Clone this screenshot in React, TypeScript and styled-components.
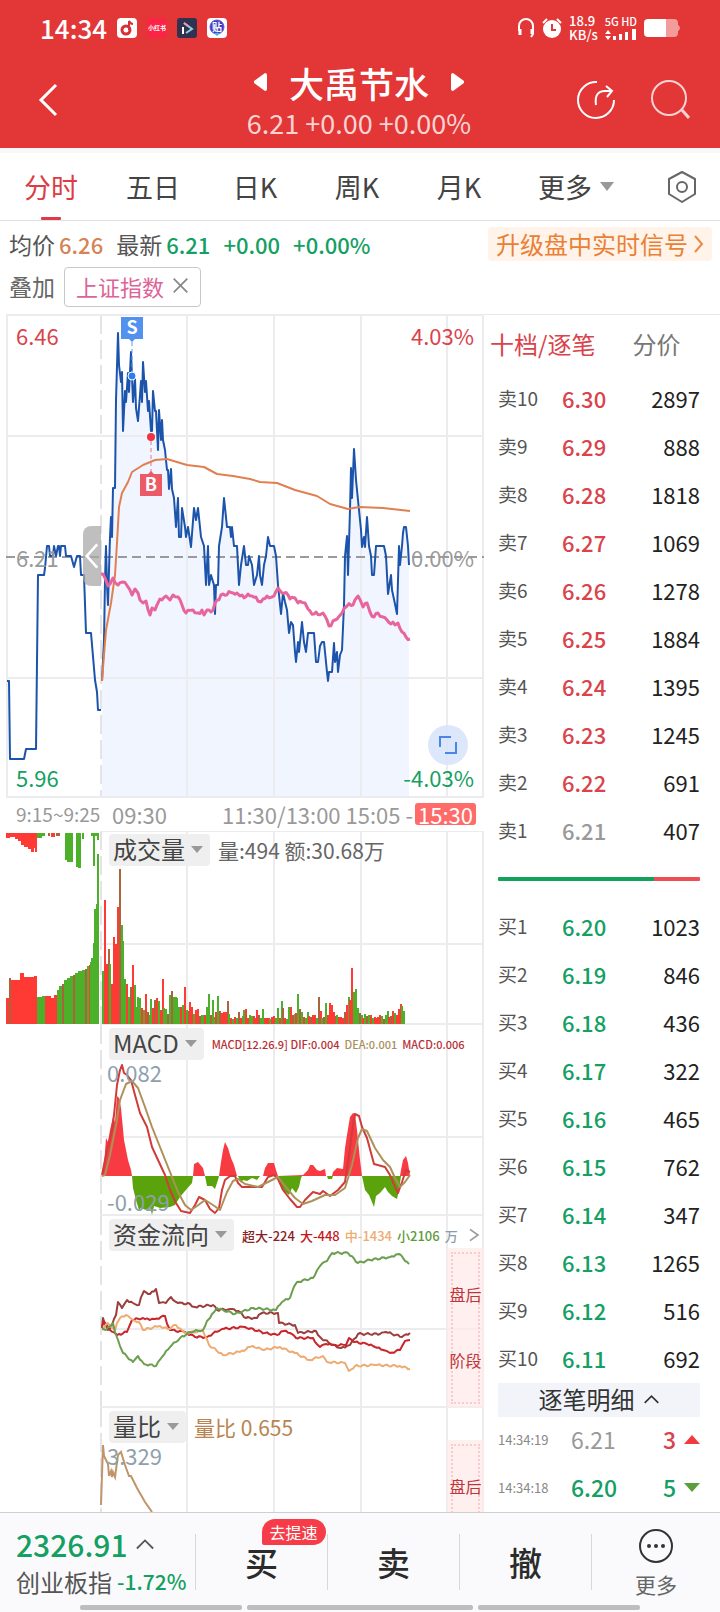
import React from 'react'
import styled, { createGlobalStyle } from 'styled-components'

const RED = '#d9434b'
const GREEN = '#14a062'
const GRID = '#ececee'

const GlobalStyle = createGlobalStyle`
  * {
    box-sizing: border-box;
  }

  body {
    margin: 0;
    background: #fff;
    color: #333;
    font-family: "Noto Sans CJK SC", "Noto Sans", sans-serif;
    font-size: 22px;
    line-height: 1;
  }

  button {
    padding: 0;
    border: none;
    background: none;
    color: inherit;
    font: inherit;
  }

  a {
    color: inherit;
    text-decoration: none;
  }

  svg {
    display: block;
    flex-shrink: 0;
  }
`

type Point = [number, number]

const toPoints = (text: string): Point[] =>
  text.trim().split(/\s+/).map(pair => pair.split(',').map(Number) as Point)

// puts small steps between the samples so that a line looks like tick data
const ragged = (text: string, amount: number) => {
  const points = toPoints(text)
  const out: Point[] = []
  points.forEach(([x, y], i) => {
    out.push([x, y])
    const next = points[i + 1]
    if (!next) {
      return
    }
    const steps = Math.floor((next[0] - x) / 2)
    for (let s = 1; s < steps; s++) {
      const px = x + s * 2
      const py = y + ((next[1] - y) * s) / steps
      out.push([px, py + Math.sin(px * 2.3) * amount])
    }
  })
  return out.map(p => p.join(',')).join(' ')
}

const AUCTION = `7,681 9,681 10,759 24,759 26,749 36,749 38,575 44,575 45,568 47,546 49,546 50,556 53,556 54,546 56,556
  58,546 59,546 60,556 61,546 65,546 66,556 71,556 74,567 77,556 80,556 81,575 84,575 86,633 91,633 95,680 97,692 98,710 101,710`

const PRICE = `102,681 104,640 105,580 106,546 107,585 108,605 109,570 110,537 111,517 112,537 113,488 115,488 116,400
  118,333 119,365 121,382 122,372 123,431 125,391 126,402 128,373 129,392 131,352 133,402 135,378 136,408 138,421 140,395
  141,381 142,402 143,362 145,392 146,381 148,411 149,401 151,431 152,431 153,391 155,411 156,411 158,450 159,410 161,440
  162,420 163,440 165,450 167,470 168,470 169,489 171,469 172,489 174,498 176,527 178,498 179,537 181,537 182,508 185,527
  186,537 188,527 191,547 194,508 196,520 198,508 201,537 204,546 206,585 208,546 209,585 211,575 214,585 215,614 216,585
  218,585 219,546 222,527 224,498 227,527 230,527 231,537 232,527 234,546 237,546 239,585 241,565 244,546 246,565 248,565
  249,556 252,565 254,585 257,575 259,556 260,575 262,585 264,565 266,556 268,537 270,546 274,546 276,556 278,585 281,614
  283,593 285,602 287,610 289,633 291,622 293,625 295,652 296,662 298,642 299,652 302,622 304,642 306,652 308,633 314,633
  316,662 318,662 320,646 322,642 324,642 326,662 327,672 328,681 329,672 332,672 334,643 335,662 337,652 338,672 340,655
  342,650 344,605 345,556 347,536 348,575 350,510 351,468 352,498 354,449 356,480 359,510 361,530 362,547 364,537 365,547
  367,517 369,546 371,556 372,575 374,575 376,546 378,546 384,546 386,556 388,594 391,575 392,590 395,604 397,614 399,546
  400,565 402,546 403,533 404,527 406,527 408,546 409,565`

const AVERAGE = `102,681 104,655 106,630 111,603 115,575 117,543 119,507 122,493 128,482 132,472 143,465 155,460 167,459
  187,465 204,467 217,474 233,476 250,479 260,482 277,483 295,490 317,496 330,504 348,509 359,507 383,508 410,511`

const INDEX = `101,574 105,578 108,586 113,578 118,585 123,582 128,587 132,595 135,589 138,593 143,603 146,601 150,615
  152,608 155,610 160,599 166,596 170,600 173,595 178,597 182,605 186,613 193,610 198,613 202,610 204,615 207,610 213,610
  217,600 223,594 233,593 240,596 252,596 261,602 263,599 272,597 278,588 282,593 288,595 290,599 295,598 298,603 305,603
  308,609 314,614 323,613 327,620 329,626 335,620 342,613 347,606 353,605 358,596 363,607 367,603 370,612 374,617 378,613
  383,617 387,620 395,625 398,623 402,632 406,637 410,639`

const DIF = `102,1175 107,1150 112,1130 114,1115 117,1085 120,1070 122,1065 124,1073 127,1075 131,1080 135,1095 140,1113
  147,1127 152,1147 158,1160 165,1175 170,1190 176,1203 181,1211 190,1213 195,1205 199,1197 205,1200 210,1209 215,1213
  219,1208 222,1190 225,1180 230,1176 235,1176 238,1183 242,1187 262,1187 268,1177 274,1175 278,1179 283,1190 290,1199
  297,1207 300,1207 305,1200 313,1192 320,1194 323,1191 330,1196 338,1190 345,1182 349,1155 353,1125 355,1114 359,1116
  362,1127 367,1138 374,1164 385,1167 390,1175 395,1187 398,1193 402,1182 406,1170 410,1172`

const DEA = `102,1176 105,1175 110,1155 117,1120 120,1100 126,1084 132,1081 138,1088 145,1107 152,1127 160,1147 170,1172
  178,1192 185,1205 191,1210 197,1206 205,1200 213,1205 220,1210 227,1192 233,1181 238,1179 245,1184 258,1187 268,1182
  278,1177 285,1186 295,1198 303,1204 312,1201 325,1195 335,1195 345,1188 352,1165 358,1138 362,1129 367,1131 375,1148
  383,1160 390,1167 395,1178 400,1187 405,1182 410,1175`

const MACD_UP = `102,1176 104,1165 106,1138 108,1142 110,1130 113,1117 115,1122 117,1096 119,1098 121,1108 124,1140
  126,1150 128,1160 131,1170 132,1176 193,1176 194,1164 198,1162 203,1168 205,1176 219,1176 221,1162 223,1150 225,1142
  228,1148 231,1158 234,1165 237,1176 263,1176 265,1168 268,1163 274,1163 276,1170 278,1176 303,1175 308,1170 310,1165
  313,1165 317,1170 320,1171 325,1169 326,1176 332,1176 333,1172 337,1168 343,1169 345,1148 347,1135 350,1117 353,1113
  355,1114 357,1130 360,1160 362,1176 400,1176 401,1170 403,1160 406,1156 408,1163 410,1176`

const MACD_DOWN = `132,1176 133,1188 136,1200 139,1210 141,1208 146,1210 150,1207 152,1215 154,1206 160,1208 170,1207
  175,1205 180,1197 185,1191 192,1183 193,1176 205,1176 207,1186 212,1186 215,1189 218,1180 219,1176 238,1176 241,1183
  243,1180 247,1181 252,1178 257,1180 260,1176 278,1176 281,1185 284,1191 289,1195 292,1188 296,1193 299,1187 301,1178
  302,1176 327,1176 328,1179 332,1179 333,1176 362,1176 365,1190 369,1195 374,1207 376,1196 380,1193 385,1187 388,1192
  392,1196 397,1199 399,1190 401,1176`

const FLOWS = [
  {
    color: '#9c3f3c',
    points: `102,1328 103,1318 108,1330 112,1325 116,1315 118,1302 122,1308 127,1300 133,1303 139,1305 144,1291 150,1294
      156,1289 159,1303 166,1303 171,1297 178,1303 190,1304 195,1307 213,1305 217,1310 230,1309 238,1311 246,1318 257,1318
      262,1313 278,1313 279,1323 295,1325 298,1333 316,1331 321,1338 333,1345 341,1348 350,1345 358,1334 380,1334 386,1332
      402,1337 410,1333`
  },
  {
    color: '#c9262b',
    points: `102,1326 104,1322 110,1330 117,1335 127,1332 132,1320 143,1318 150,1320 155,1319 165,1316 170,1330 185,1332
      195,1337 207,1337 222,1329 245,1327 265,1333 277,1335 284,1331 290,1333 296,1338 313,1338 320,1347 326,1344 335,1345
      346,1345 349,1338 355,1342 367,1344 375,1347 383,1350 390,1353 400,1350 405,1341 410,1340`
  },
  {
    color: '#ecac72',
    points: `102,1330 108,1323 115,1330 120,1318 126,1315 133,1320 139,1322 143,1330 160,1326 168,1329 176,1325 185,1333
      203,1331 209,1345 223,1355 240,1352 253,1346 263,1350 280,1347 295,1353 310,1360 323,1356 327,1362 345,1363 349,1371
      355,1366 375,1365 400,1366 410,1369`
  },
  {
    color: '#6b9e4e',
    points: `102,1328 106,1330 113,1323 118,1340 123,1353 133,1362 138,1356 144,1364 156,1366 162,1357 170,1347 180,1338
      190,1332 203,1330 210,1318 217,1308 223,1310 235,1314 253,1308 276,1310 282,1302 290,1298 297,1282 313,1278 320,1266
      327,1261 332,1253 348,1253 358,1263 370,1260 390,1257 399,1254 409,1264`
  }
]

const RATIO = `101,1505 103,1445 104,1456 106,1460 108,1464 109,1476 111,1471 112,1477 113,1472 115,1477 118,1455 121,1452
  125,1465 129,1476 131,1476 137,1488 145,1502 152,1512`

// height and colour of each bar (r up, g down, m mixed)
const VOLUME = `53g 124r 60r 75m 60g 40r 87r 80r 117r 155m 99g 83g 45g 40r 27g 37m 59r 39g 17g 27g 26g 16r 14g 30r 12m 9g 25g
  16r 24m 26r 23g 14r 45r 16g 15g 10m 29g 33m 27g 27g 26g 17g 17r 19g 37r 14g 13m 22r 17r 10g 14r 15r 8m 9g 9g 9r 17g 30g 9m 24g
  7g 12r 28g 13m 11r 12r 12r 23m 10g 6r 5g 7r 6g 12m 6r 8g 14g 15r 6r 9g 8g 8r 6r 14r 9m 6g 15g 6r 6r 6r 5g 7r 8r 6g 16g 6r 23g
  16m 6r 5g 17g 17r 9m 10g 11r 30g 15m 12g 7r 6g 12g 8r 7m 9r 9r 6g 27m 13r 6g 7m 21g 9r 21r 19r 12r 8m 9g 7r 7r 6r 12m 19r 27g
  24r 56r 32g 35g 16g 11m 9g 6r 10g 8m 9g 9r 6g 7r 6r 7r 9r 8g 5m 9g 13g 7r 8m 13r 11g 9r 15r 20r 18g 13g`
  .trim().split(/\s+/)
  .map((item, i) => ({ x: Math.round(102 + i * 1.86), height: parseInt(item, 10), tone: item.slice(-1) }))
  .filter(bar => bar.x < 409)

const BAR_COLORS: Record<string, string> = { r: '#ff3a35', g: '#4db02b', m: '#a9643c' }

// x, width, top, bottom, tone
const AUCTION_BARS: [number, number, number, number, string][] = [
  [6, 3, 998, 1024, 'r'], [9, 2, 978, 1024, 'm'], [11, 9, 980, 1024, 'r'], [20, 4, 973, 1024, 'r'], [24, 10, 977, 1024, 'r'],
  [34, 3, 976, 1024, 'r'], [37, 5, 997, 1024, 'g'], [42, 3, 996, 1024, 'g'], [45, 6, 996, 1024, 'r'], [51, 3, 998, 1024, 'r'],
  [54, 3, 995, 1024, 'r'], [57, 2, 990, 1024, 'g'], [59, 3, 986, 1024, 'g'], [62, 2, 984, 1024, 'm'], [64, 3, 980, 1024, 'g'],
  [67, 3, 978, 1024, 'g'], [70, 3, 976, 1024, 'g'], [73, 2, 975, 1024, 'm'], [75, 3, 973, 1024, 'g'], [78, 4, 971, 1024, 'g'],
  [82, 3, 970, 1024, 'g'], [85, 2, 969, 1024, 'm'], [87, 2, 966, 1024, 'g'], [89, 1, 965, 1024, 'r'], [90, 1, 962, 1024, 'g'],
  [91, 2, 958, 1024, 'g'], [93, 1, 943, 1024, 'g'], [94, 2, 909, 1024, 'g'], [96, 1, 904, 1024, 'g'], [97, 2, 854, 1024, 'g'],
  [6, 4, 833, 838, 'r'], [10, 5, 833, 837, 'r'], [15, 3, 833, 839, 'r'], [18, 3, 833, 841, 'r'], [21, 3, 833, 845, 'r'],
  [24, 4, 833, 847, 'r'], [28, 3, 833, 849, 'r'], [31, 3, 833, 852, 'r'], [34, 1, 833, 848, 'r'], [35, 2, 833, 852, 'r'],
  [37, 5, 833, 838, 'g'], [42, 3, 833, 836, 'g'], [48, 2, 833, 836, 'm'], [51, 4, 833, 837, 'r'], [56, 4, 833, 836, 'm'],
  [65, 2, 833, 860, 'g'], [67, 6, 833, 862, 'g'], [76, 2, 833, 867, 'g'], [78, 3, 833, 868, 'g'], [82, 2, 833, 839, 'g'],
  [91, 7, 833, 836, 'g'], [93, 2, 833, 866, 'g'], [97, 2, 833, 840, 'g']
]

const SELLS: [string, string, number][] = [
  ['卖10', '6.30', 2897], ['卖9', '6.29', 888], ['卖8', '6.28', 1818], ['卖7', '6.27', 1069], ['卖6', '6.26', 1278],
  ['卖5', '6.25', 1884], ['卖4', '6.24', 1395], ['卖3', '6.23', 1245], ['卖2', '6.22', 691], ['卖1', '6.21', 407]
]

const BUYS: [string, string, number][] = [
  ['买1', '6.20', 1023], ['买2', '6.19', 846], ['买3', '6.18', 436], ['买4', '6.17', 322], ['买5', '6.16', 465],
  ['买6', '6.15', 762], ['买7', '6.14', 347], ['买8', '6.13', 1265], ['买9', '6.12', 516], ['买10', '6.11', 692]
]

const Grid = ({ top, bottom, lines, from = 101 }: { top: number, bottom: number, lines: number[], from?: number }) => (
  <g stroke={GRID} strokeWidth="2">
    {[187, 274, 361, 447].map(x => <line key={x} x1={x} x2={x} y1={top} y2={bottom} />)}
    <line x1="483" x2="483" y1={top} y2={bottom} />
    <line x1="101" x2="101" y1={top} y2={bottom} strokeDasharray="19 6" stroke="#e4e4e6" />
    {lines.map(y => <line key={y} x1={from} x2="484" y1={y} y2={y} />)}
  </g>
)

const PriceChart = () => (
  <ChartSvg viewBox="6 314 478 484" role="img" aria-label="分时走势">
    <polygon points={`102,797 ${PRICE} 409,797`} fill="#f0f5ff" />
    <Grid top={315} bottom={798} lines={[315, 436, 678, 797]} from={6} />
    <line x1="7" x2="7" y1="315" y2="798" stroke={GRID} strokeWidth="2" />
    <line x1="6" x2="484" y1="557" y2="557" stroke="#9a9a9a" strokeWidth="2" strokeDasharray="9 5" />
    <g fill="none" strokeLinejoin="round">
      <polyline points={AUCTION} stroke="#1c54ab" strokeWidth="2" />
      <polyline points={PRICE} stroke="#1c54ab" strokeWidth="2" />
      <polyline points={AVERAGE} stroke="#e08050" strokeWidth="2" />
      <polyline points={ragged(INDEX, 2)} stroke="#e8659b" strokeWidth="3" />
    </g>
    <line x1="132" x2="132" y1="342" y2="372" stroke="#5f97ee" strokeWidth="1" strokeDasharray="4 3" />
    <circle cx="132" cy="376" r="4" fill="#2c7df5" stroke="#fff" />
    <path d="M121 317h22v22h-8l-3 3-3-3h-8z" fill="#5291ee" />
    <line x1="151" x2="151" y1="441" y2="472" stroke="#ea7385" strokeWidth="1" strokeDasharray="4 3" />
    <circle cx="151" cy="437" r="4" fill="#ee3642" />
    <path d="M140 474h8l3-3 3 3h8v22h-22z" fill="#ec5a68" />
    <g fill="#fff" fontSize="18" fontWeight="700" textAnchor="middle">
      <text x="132" y="334">S</text>
      <text x="151" y="491">B</text>
    </g>
  </ChartSvg>
)

const VolumeChart = () => (
  <ChartSvg viewBox="6 831 478 194" role="img" aria-label="成交量">
    <Grid top={831} bottom={1025} lines={[831, 944, 1024]} />
    {AUCTION_BARS.map(([x, width, top, bottom, tone], i) => (
      <rect key={i} x={x} y={top} width={width} height={bottom - top} fill={BAR_COLORS[tone]} />
    ))}
    {VOLUME.map(bar => (
      <rect key={bar.x} x={bar.x} y={1024 - bar.height} width="2" height={bar.height} fill={BAR_COLORS[bar.tone]} />
    ))}
  </ChartSvg>
)

const MacdChart = () => (
  <ChartSvg viewBox="6 1025 478 191" role="img" aria-label="MACD">
    <Grid top={1025} bottom={1216} lines={[1137, 1215]} />
    <polygon points={MACD_UP} fill="#f83a42" />
    <polygon points={MACD_DOWN} fill="#5ba30c" />
    <g fill="none" strokeWidth="2" strokeLinejoin="round">
      <polyline points={DIF} stroke="#d23b3b" />
      <polyline points={DEA} stroke="#ad9159" />
    </g>
  </ChartSvg>
)

const FlowChart = () => (
  <ChartSvg viewBox="6 1216 478 192" role="img" aria-label="资金流向">
    <Grid top={1216} bottom={1408} lines={[1329, 1407]} />
    <g fill="none" strokeWidth="2" strokeLinejoin="round">
      {FLOWS.map(flow => <polyline key={flow.color} points={ragged(flow.points, 1)} stroke={flow.color} />)}
    </g>
  </ChartSvg>
)

const RatioChart = () => (
  <ChartSvg viewBox="6 1408 478 192" role="img" aria-label="量比">
    <Grid top={1408} bottom={1600} lines={[1520]} />
    <polyline points={RATIO} fill="none" stroke="#c1946a" strokeWidth="2" />
  </ChartSvg>
)

const Chevron = ({ d, size, width = 2 }: { d: string, size: number, width?: number }) => (
  <svg width={size} height={size} viewBox="0 0 20 20" fill="none" stroke="currentColor" strokeWidth={width} aria-hidden="true">
    <path d={d} />
  </svg>
)

const StatusBar = () => (
  <Status>
    <StatusGroup $gap={10}>
      <Clock>14:34</Clock>
      <svg width="20" height="20" viewBox="0 0 20 20">
        <rect width="20" height="20" rx="4" fill="#fff" />
        <circle cx="9" cy="12" r="4" fill="none" stroke="#d83036" strokeWidth="3" />
        <path d="M12 12V3c1 2 2 3 4 3" fill="none" stroke="#d83036" strokeWidth="2" />
      </svg>
      <AppBadge>小红书</AppBadge>
      <svg width="20" height="20" viewBox="0 0 20 20">
        <rect width="20" height="20" rx="3" fill="#303252" />
        <path d="M6 16V9" stroke="#fff" strokeWidth="2" />
        <path d="M7 5l8 6-6 4" fill="none" stroke="#8fd0de" strokeWidth="2" />
        <path d="M7 5l4 3" stroke="#f09aa8" strokeWidth="2" />
      </svg>
      <svg width="20" height="20" viewBox="0 0 20 20">
        <rect width="20" height="20" rx="4" fill="#fff" />
        <circle cx="10" cy="9" r="7" fill="#3c3fc0" stroke="#6a4cd8" />
        <path d="M7 15l3 3 3-3z" fill="#38b6e8" />
        <text x="10" y="13" fontSize="10" fontWeight="700" fill="#fff" textAnchor="middle">贴</text>
      </svg>
    </StatusGroup>
    <StatusGroup $gap={7}>
      <svg width="18" height="20" viewBox="0 0 18 20" fill="none" stroke="#fff" strokeWidth="2">
        <path d="M2 13V8a7 7 0 0 1 14 0v8l-2 3" />
        <path d="M3 11v6M15 11v5" strokeWidth="3" />
      </svg>
      <svg width="20" height="20" viewBox="0 0 20 20">
        <circle cx="10" cy="11" r="9" fill="#fff" />
        <path d="M1 5l4-4M19 5l-4-4" stroke="#fff" strokeWidth="2" />
        <path d="M10 6v6h4" fill="none" stroke="#e23637" strokeWidth="2" />
      </svg>
      <Stack>
        <span>18.9</span>
        <span>KB/s</span>
      </Stack>
      <Stack $small>
        <span>5G HD</span>
        <svg width="32" height="12" viewBox="0 0 32 12" fill="#fff">
          <path d="M0 5l3-4 3 4zM0 7l3 4 3-4zM8 7h3v4H8zM14 5h3v6h-3zM20 3h3v8h-3zM27 0h4v11h-4z" />
        </svg>
      </Stack>
      <svg width="36" height="20" viewBox="0 0 36 20">
        <path d="M22 1h8q4 0 4 4v2q2 1 2 3t-2 3v2q0 4-4 4h-8z" fill="#f39c9c" />
        <path d="M22 1H4Q0 1 0 5v10q0 4 4 4h18z" fill="#fff" />
      </svg>
    </StatusGroup>
  </Status>
)

const Quote = ({ row, color }: { row: [string, string, number], color: string }) => (
  <tr>
    <th scope="row">{row[0]}</th>
    <QuotePrice $color={color}>{row[1]}</QuotePrice>
    <td>{row[2]}</td>
  </tr>
)

const App = () => (
  <Page>
    <GlobalStyle />
    <Header>
      <StatusBar />
      <TitleBar>
        <IconButton aria-label="返回">
          <svg width="20" height="34" viewBox="0 0 20 34" fill="none" stroke="#fff" strokeWidth="3">
            <path d="M18 2L3 17l15 15" />
          </svg>
        </IconButton>
        <TitleBlock>
          <Title>
            <button aria-label="上一只">
              <svg width="13" height="18" viewBox="0 0 13 18" fill="#fff"><path d="M11 0q2 0 2 2v14q0 2-2 2L0 10V8z" /></svg>
            </button>
            <h1>大禹节水</h1>
            <button aria-label="下一只">
              <svg width="13" height="18" viewBox="0 0 13 18" fill="#fff"><path d="M2 0Q0 0 0 2v14q0 2 2 2l11-8V8z" /></svg>
            </button>
          </Title>
          <Subtitle>6.21 +0.00 +0.00%</Subtitle>
        </TitleBlock>
        <IconButton aria-label="分享">
          <svg width="40" height="40" viewBox="0 0 40 40" fill="none" stroke="#fff" strokeWidth="2">
            <path d="M21 2A18 18 0 1 0 38 20" />
            <path d="M20 25q-2-14 9-14h6M30 6l6 5-5 6" />
          </svg>
        </IconButton>
        <IconButton aria-label="搜索">
          <svg width="40" height="40" viewBox="0 0 40 40" fill="none" stroke="#fbd3d3" strokeWidth="2">
            <circle cx="19" cy="18" r="17" />
            <path d="M32 30l7 8" strokeWidth="3" />
          </svg>
        </IconButton>
      </TitleBar>
    </Header>

    <Tabs>
      <Tab $active>分时</Tab>
      <Tab>五日</Tab>
      <Tab>日K</Tab>
      <Tab>周K</Tab>
      <Tab>月K</Tab>
      <TabExtra>
        <Tab>更多<Caret /></Tab>
        <button aria-label="设置">
          <svg width="30" height="32" viewBox="0 0 30 32" fill="none" stroke="#666" strokeWidth="2" strokeLinejoin="round">
            <path d="M15 1l13 7v15l-13 8-13-8V8z" />
            <circle cx="15" cy="16" r="5" />
          </svg>
        </button>
      </TabExtra>
    </Tabs>

    <Summary>
      <Pair>均价<Value $color="#d48455">6.26</Value></Pair>
      <Pair>最新<Value $color={GREEN}>6.21</Value></Pair>
      <Value $color={GREEN}>+0.00</Value>
      <Value $color={GREEN}>+0.00%</Value>
      <Upgrade href="#signal">
        升级盘中实时信号
        <svg width="10" height="18" viewBox="0 0 10 18" fill="none" stroke="#ea8b45" strokeWidth="2"><path d="M1 1l7 8-7 8" /></svg>
      </Upgrade>
    </Summary>
    <Overlay>
      叠加
      <Chip>
        上证指数
        <Chevron d="M2 2l16 16M18 2L2 18" size={17} />
      </Chip>
    </Overlay>

    <Main>
      <Charts>
        <Panel>
          <PriceChart />
          <Corner $v="top" $h="left" $color={RED}>6.46</Corner>
          <Corner $v="top" $h="right" $color={RED}>4.03%</Corner>
          <Corner $v="middle" $h="left" $color="#9a9a9a">6.21</Corner>
          <Corner $v="middle" $h="right" $color="#9a9a9a">0.00%</Corner>
          <Corner $v="bottom" $h="left" $color={GREEN}>5.96</Corner>
          <Corner $v="bottom" $h="right" $color={GREEN}>-4.03%</Corner>
          <Handle aria-label="收起竞价">
            <Chevron d="M14 1L6 10l8 9" size={26} />
          </Handle>
          <Expand aria-label="全屏">
            <svg width="20" height="20" viewBox="0 0 20 20" fill="none" stroke="#4a86e8" strokeWidth="2">
              <path d="M2 12V2h11M18 7v11H7" />
            </svg>
          </Expand>
        </Panel>

        <TimeAxis>
          <small>9:15~9:25</small>
          <span>09:30</span>
          <AxisEnd>11:30/13:00 15:05 -<mark>15:30</mark></AxisEnd>
        </TimeAxis>

        <Panel>
          <VolumeChart />
          <PanelHead>
            <Selector>成交量<Caret $small /></Selector>
            <Legend $size={21} $color="#666">量:494 额:30.68万</Legend>
          </PanelHead>
        </Panel>

        <Panel>
          <MacdChart />
          <PanelHead>
            <Selector>MACD<Caret $small /></Selector>
            <Legend $size={11}>
              <Value $color="#b82f35">MACD[12.26.9] DIF:0.004</Value>
              <Value $color="#a8905c">DEA:0.001</Value>
              <Value $color="#b82f35">MACD:0.006</Value>
            </Legend>
          </PanelHead>
          <Extreme $v="top">0.082</Extreme>
          <Extreme $v="bottom">-0.029</Extreme>
        </Panel>

        <Panel>
          <FlowChart />
          <PanelHead>
            <Selector>资金流向<Caret $small /></Selector>
            <Legend $size={13}>
              <Value $color="#8c1f1f">超大-224</Value>
              <Value $color="#c4161c">大-448</Value>
              <Value $color="#ecac72">中-1434</Value>
              <Value $color="#5d9a3c">小2106</Value>
              <Value $color="#8b9bab">万</Value>
            </Legend>
            <MoreLink aria-label="更多资金流向">
              <Chevron d="M5 3l10 7-10 7" size={16} />
            </MoreLink>
          </PanelHead>
          <AfterHours><span>盘后</span><span>阶段</span></AfterHours>
        </Panel>

        <Panel>
          <RatioChart />
          <PanelHead>
            <Selector>量比<Caret $small /></Selector>
            <Legend $size={21} $color="#b98351">量比 0.655</Legend>
          </PanelHead>
          <Extreme $v="top">3.329</Extreme>
          <AfterHours><span>盘后</span></AfterHours>
        </Panel>
      </Charts>

      <Book>
        <BookTabs>
          <BookTab $active>十档/逐笔</BookTab>
          <BookTab>分价</BookTab>
        </BookTabs>
        <Quotes>
          <tbody>
            {SELLS.map(row => <Quote key={row[0]} row={row} color={row[1] === '6.21' ? '#999' : RED} />)}
          </tbody>
        </Quotes>
        <Balance><div /></Balance>
        <Quotes>
          <tbody>
            {BUYS.map(row => <Quote key={row[0]} row={row} color={GREEN} />)}
          </tbody>
        </Quotes>
        <DetailButton>
          逐笔明细
          <Chevron d="M2 14l8-8 8 8" size={17} />
        </DetailButton>
        <Tick>
          <time>14:34:19</time>
          <Value $color="#999">6.21</Value>
          <Volume $color={RED}>3<Arrow $up /></Volume>
        </Tick>
        <Tick>
          <time>14:34:18</time>
          <Value $color={GREEN} $strong>6.20</Value>
          <Volume $color={GREEN}>5<Arrow /></Volume>
        </Tick>
      </Book>
    </Main>

    <Footer>
      <FooterRow>
        <Board>
          <BoardValue>2326.91<Chevron d="M1 15l9-9 9 9" size={18} /></BoardValue>
          <BoardName>创业板指<Value $color={GREEN} $strong>-1.72%</Value></BoardName>
        </Board>
        <Action>买<Promo>去提速</Promo></Action>
        <Action>卖</Action>
        <Action>撤</Action>
        <MoreAction>
          <svg width="34" height="34" viewBox="0 0 34 34">
            <circle cx="17" cy="17" r="16" fill="none" stroke="#333" strokeWidth="2" />
            <g fill="#333"><circle cx="10" cy="17" r="2" /><circle cx="17" cy="17" r="2" /><circle cx="24" cy="17" r="2" /></g>
          </svg>
          更多
        </MoreAction>
      </FooterRow>
      <HomeBars><i /><i /><i /></HomeBars>
    </Footer>
  </Page>
)

export default App

const Page = styled.div`
  display: flex;
  flex-direction: column;
  height: 100vh;
  overflow: hidden;
`

const Header = styled.header`
  background: #e23637;
  color: #fff;
`

const Status = styled.div`
  display: flex;
  align-items: center;
  justify-content: space-between;
  height: 56px;
  padding: 0 40px;
`

const StatusGroup = styled.div<{ $gap: number }>`
  display: flex;
  align-items: center;
  gap: ${props => props.$gap}px;
`

const Clock = styled.span`
  font-size: 26px;
  font-weight: 500;
`

const AppBadge = styled.span`
  width: 20px;
  border-radius: 4px;
  background: #fb2445;
  font-size: 6px;
  font-weight: 700;
  line-height: 20px;
  text-align: center;
  white-space: nowrap;
`

const Stack = styled.div<{ $small?: boolean }>`
  display: flex;
  flex-direction: column;
  gap: ${props => props.$small ? '2px' : '0'};
  font-size: ${props => props.$small ? '11px' : '13px'};
  font-weight: 500;
  line-height: ${props => props.$small ? '11px' : '14px'};
  white-space: nowrap;
`

const TitleBar = styled.div`
  display: flex;
  align-items: center;
  gap: 34px;
  height: 92px;
  padding: 0 30px 4px 38px;
`

const IconButton = styled.button`
  display: flex;
`

const TitleBlock = styled.div`
  display: flex;
  flex: 1;
  flex-direction: column;
  align-items: center;
  gap: 9px;
  padding-left: 84px;
`

const Title = styled.div`
  display: flex;
  align-items: center;
  gap: 22px;

  h1 {
    margin: 0;
    font-size: 35px;
    font-weight: 500;
  }
`

const Subtitle = styled.div`
  color: #fbd3d3;
  font-size: 27px;
`

const Tabs = styled.nav`
  display: grid;
  grid-template-columns: repeat(5, 102fr) 210fr;
  height: 73px;
  border-top: 5px solid #f8f8f8;
  border-bottom: 1px solid #e2e2e2;
`

const Tab = styled.button<{ $active?: boolean }>`
  position: relative;
  display: flex;
  align-items: center;
  justify-content: center;
  gap: 8px;
  color: ${props => props.$active ? '#dc3c45' : '#444'};
  font-size: 27px;

  &::after {
    position: absolute;
    bottom: 0;
    width: 20px;
    height: 3px;
    border-radius: 1px;
    background: ${props => props.$active ? '#dc3c45' : 'none'};
    content: '';
  }
`

const TabExtra = styled.div`
  display: flex;
  align-items: center;
  justify-content: space-between;
  padding: 0 23px 0 28px;
`

const Caret = styled.i<{ $small?: boolean }>`
  border: ${props => props.$small ? '6px' : '7px'} solid transparent;
  border-top: ${props => props.$small ? '7px' : '9px'} solid #999;
  border-bottom: none;
`

const Value = styled.span<{ $color: string, $strong?: boolean }>`
  color: ${props => props.$color};
  font-weight: ${props => props.$strong ? 500 : 'inherit'};
`

const Summary = styled.div`
  display: flex;
  align-items: center;
  gap: 13px;
  height: 46px;
  padding: 0 8px 0 9px;
  color: #555;
  font-size: 23px;

  > span {
    font-size: 22px;
    font-weight: 500;
  }
`

const Pair = styled.div`
  display: flex;
  align-items: center;
  gap: 4px;

  span {
    font-size: 22px;
    font-weight: 500;
  }
`

const Upgrade = styled.a`
  display: flex;
  align-items: center;
  gap: 6px;
  height: 34px;
  margin-left: auto;
  padding: 0 8px;
  border-radius: 4px;
  background: #fff3ea;
  color: #ea8034;
  font-size: 24px;
`

const Overlay = styled.div`
  display: flex;
  align-items: center;
  gap: 9px;
  height: 47px;
  padding: 0 9px 8px;
  color: #666;
  font-size: 23px;
`

const Chip = styled.button`
  display: flex;
  align-items: center;
  gap: 8px;
  height: 40px;
  padding: 0 11px 2px;
  border: 1px solid #c8c8c8;
  border-radius: 4px;
  color: #dd6398;
  font-size: 22px;

  svg {
    color: #888;
  }
`

const Main = styled.main`
  display: grid;
  flex: 1;
  grid-template-columns: 478fr 236fr;
  align-items: start;
  min-height: 0;
  overflow: hidden;
  padding-left: 6px;
`

const Charts = styled.div`
  min-width: 0;
`

const Panel = styled.section`
  position: relative;
`

const ChartSvg = styled.svg`
  width: 100%;
  height: auto;
`

type CornerProps = {
  $v: 'top' | 'middle' | 'bottom'
  $h: 'left' | 'right'
  $color: string
}

const Corner = styled.span<CornerProps>`
  position: absolute;
  ${props => props.$v === 'middle' ? 'top: calc(50% - 10px);' : `${props.$v}: 10px;`}
  ${props => props.$h}: 10px;
  color: ${props => props.$color};
`

const Handle = styled.button`
  position: absolute;
  top: calc(50% - 30px);
  left: 77px;
  display: flex;
  align-items: center;
  justify-content: center;
  width: 18px;
  height: 60px;
  border-radius: 8px 0 0 8px;
  background: rgba(170, 170, 170, 0.75);
  color: #fff;
`

const Expand = styled.button`
  position: absolute;
  right: 16px;
  bottom: 33px;
  display: flex;
  align-items: center;
  justify-content: center;
  width: 40px;
  height: 40px;
  border-radius: 50%;
  background: rgba(215, 227, 252, 0.85);
`

const TimeAxis = styled.div`
  display: flex;
  align-items: center;
  height: 33px;
  padding: 0 8px 2px 10px;
  color: #999;

  small {
    width: 96px;
    font-size: 19px;
  }
`

const AxisEnd = styled.span`
  display: flex;
  align-items: center;
  gap: 2px;
  margin-left: auto;
  white-space: pre;

  mark {
    padding: 0 3px;
    border-radius: 3px;
    background: #ff6b68;
    color: #fff;
  }
`

const PanelHead = styled.div`
  position: absolute;
  top: 3px;
  right: 3px;
  left: 103px;
  display: flex;
  align-items: center;
  gap: 8px;
`

const Selector = styled.button`
  display: flex;
  flex-shrink: 0;
  align-items: center;
  gap: 6px;
  height: 32px;
  padding: 0 7px 2px 4px;
  border-radius: 4px;
  background: #efefef;
  color: #444;
  font-size: 24px;
`

const Legend = styled.span<{ $size: number, $color?: string }>`
  display: flex;
  gap: 5px;
  color: ${props => props.$color || 'inherit'};
  font-size: ${props => props.$size}px;
  font-weight: ${props => props.$size < 20 ? 500 : 400};
  white-space: nowrap;
`

const MoreLink = styled.button`
  margin-left: auto;
  color: #999;
`

const Extreme = styled.span<{ $v: 'top' | 'bottom' }>`
  position: absolute;
  ${props => props.$v}: ${props => props.$v === 'top' ? '36px' : '4px'};
  left: 101px;
  color: #8f9fad;
`

const AfterHours = styled.div`
  position: absolute;
  top: 32px;
  right: 0;
  bottom: 0;
  display: flex;
  flex-direction: column;
  align-items: center;
  gap: 50px;
  width: 37px;
  padding-top: 38px;
  background: rgba(255, 233, 233, 0.75);
  color: #c0353a;
  font-size: 16px;

  &::before {
    position: absolute;
    inset: 4px;
    border: 2px dotted #f6cccc;
    content: '';
  }

  span {
    position: relative;
  }
`

const Book = styled.aside`
  padding: 0 20px 0 14px;
  border-top: 1px solid #e8e8e8;
`

const BookTabs = styled.div`
  display: flex;
  align-items: center;
  gap: 37px;
  height: 60px;
  margin-left: -8px;
  padding-bottom: 2px;
`

const BookTab = styled.button<{ $active?: boolean }>`
  color: ${props => props.$active ? RED : '#777'};
  font-size: 24px;
  white-space: nowrap;
`

const Quotes = styled.table`
  width: 100%;
  border-collapse: collapse;
  table-layout: fixed;

  tr {
    height: 48px;
  }

  th {
    width: 64px;
    padding: 0 0 3px;
    color: #555;
    font-size: 19px;
    font-weight: 400;
    text-align: left;
  }

  td {
    padding: 0 0 3px;
    color: #222;
    text-align: right;
  }
`

const QuotePrice = styled.td<{ $color: string }>`
  && {
    color: ${props => props.$color};
    font-weight: 500;
    text-align: left;
  }
`

const Balance = styled.div`
  display: flex;
  align-items: center;
  height: 48px;

  div {
    width: 100%;
    height: 4px;
    border-radius: 1px;
    background: linear-gradient(to right, #12a25e 77%, #ee4d55 77%);
  }
`

const DetailButton = styled.button`
  display: flex;
  align-items: center;
  justify-content: center;
  gap: 8px;
  width: 100%;
  height: 34px;
  padding-bottom: 2px;
  background: #f2f4f9;
  font-size: 24px;
`

const Tick = styled.div`
  display: grid;
  grid-template-columns: 73px 1fr auto;
  align-items: center;
  height: 48px;
  padding-bottom: 3px;
  font-size: 23px;

  time {
    color: #888;
    font-size: 13px;
  }
`

const Volume = styled.span<{ $color: string }>`
  display: flex;
  align-items: center;
  gap: 8px;
  color: ${props => props.$color};
  font-weight: 500;
`

const Arrow = styled.i<{ $up?: boolean }>`
  border: 8px solid transparent;
  border-${props => props.$up ? 'bottom' : 'top'}: 9px solid ${props => props.$up ? '#f03a3e' : '#5b9f3c'};
  border-${props => props.$up ? 'top' : 'bottom'}: none;
`

const Footer = styled.footer`
  border-top: 1px solid #cfcfd1;
  background: #fafafc;
`

const FooterRow = styled.div`
  display: grid;
  grid-template-columns: 195fr 132fr 132fr 132fr 129fr;
  align-items: center;
  height: 92px;
  padding-top: 6px;
`

const Board = styled.div`
  display: flex;
  flex-direction: column;
  gap: 11px;
  padding: 0 0 2px 16px;
  color: #555;
`

const BoardValue = styled.div`
  display: flex;
  align-items: center;
  gap: 8px;
  color: ${GREEN};
  font-size: 30px;
  font-weight: 500;

  svg {
    color: #555;
  }
`

const BoardName = styled.div`
  display: flex;
  align-items: center;
  gap: 5px;
  font-size: 24px;
  white-space: nowrap;

  span {
    font-size: 21px;
  }
`

const Action = styled.button`
  position: relative;
  height: 56px;
  border-left: 1px solid #d8d8da;
  color: #2b2b2b;
  font-size: 33px;
  font-weight: 500;
`

const Promo = styled.span`
  position: absolute;
  top: -15px;
  left: 50%;
  padding: 5px 8px;
  border-radius: 13px 13px 13px 2px;
  background: #f63c48;
  color: #fff;
  font-size: 16px;
  font-weight: 400;
  white-space: nowrap;
`

const MoreAction = styled.button`
  display: flex;
  flex-direction: column;
  align-items: center;
  justify-content: center;
  gap: 11px;
  height: 56px;
  border-left: 1px solid #d8d8da;
  color: #666;
  font-size: 21px;
`

const HomeBars = styled.div`
  display: grid;
  grid-template-columns: 162fr 227fr 162fr;
  gap: 5px;
  height: 7px;
  padding: 0 80px;

  i {
    height: 5px;
    border-radius: 2px;
    background: #bdbdbf;
  }
`
